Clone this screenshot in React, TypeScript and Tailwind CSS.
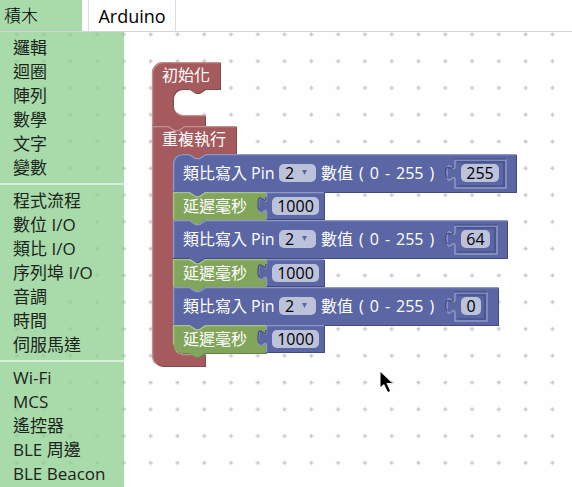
import type { ReactNode } from "react";

const SANS = "font-['Open_Sans','Noto_Sans_CJK_TC',sans-serif]";

type Tone = { base: string; light: string; dark: string };

const RED: Tone = { base: "#a55b5e", light: "#c28e90", dark: "#84494b" };
const BLUE: Tone = { base: "#5b67a5", light: "#8f98c3", dark: "#414b82" };
const GREEN: Tone = { base: "#80a55b", light: "#a8c28e", dark: "#668449" };

const GROUPS = [
  ["邏輯", "迴圈", "陣列", "數學", "文字", "變數"],
  ["程式流程", "數位 I/O", "類比 I/O", "序列埠 I/O", "音調", "時間", "伺服馬達"],
  ["Wi-Fi", "MCS", "遙控器", "BLE 周邊", "BLE Beacon"],
];

const NOTCH = "l6,4 h4 l6,-4";
const NOTCH_BACK = "l-6,4 h-4 l-6,-4";
const TAB = "v5 c0,11 -8,-9 -8,8 s8,-3 8,8";

/* Block outline with a lower-right shade and an upper-left highlight. */
function Shape({ d, edge, tone }: { d: string; edge: string; tone: Tone }) {
  return (
    <svg className="absolute inset-0 h-full w-full overflow-visible" aria-hidden="true">
      <path d={d} fill={tone.dark} transform="translate(1 1)" />
      <path d={d} fill={tone.base} />
      <path d={edge} fill="none" stroke={tone.light} strokeWidth="1.4" transform="translate(.6 .6)" />
    </svg>
  );
}

function Block({ place, children }: { place: string; children: ReactNode }) {
  return <div className={`absolute text-base leading-5 text-white ${place}`}>{children}</div>;
}

function NumberField({ label, value, width }: { label: string; value: string; width: string }) {
  return (
    <input
      aria-label={label}
      defaultValue={value}
      className={`relative h-[18px] rounded-[5px] bg-[#bdc2db] p-0 text-center text-base leading-[18px] text-black outline-none ${width}`}
    />
  );
}

type WriteProps = { place: string; width: number; slot: number; value: string; field: string; first?: boolean };

function WriteBlock({ place, width, slot, value, field, first = false }: WriteProps) {
  const start = first ? "M0,9 a9,9 0 0 1 9,-9" : "M0,0";
  const edgeStart = first ? "M0,37 V9 a9,9 0 0 1 9,-9" : "M0,37 V0";
  const right = 282 + slot;
  return (
    <Block place={place}>
      <Shape
        d={`${start} H16 ${NOTCH} H${width} V38 H32 ${NOTCH_BACK} H0 z`}
        edge={`${edgeStart} H16 ${NOTCH} H${width}`}
        tone={BLUE}
      />
      <svg className="absolute inset-0 h-full w-full overflow-visible" aria-hidden="true" fill="none">
        <path d={`M282,6 ${TAB} V34 H${right} V6 z`} stroke={BLUE.light} strokeWidth="1.5" />
        <path d={`M281,5 H${right}`} stroke={BLUE.dark} strokeWidth="1" />
        <path d={`M284,8 H${right - 2} V32 H284`} stroke={BLUE.dark} strokeWidth="1.2" />
        <path d="M280.5,12 c-1,6 -8,-4 -8,7 c0,3 1,4 2,5" stroke={BLUE.dark} strokeWidth="1.2" />
      </svg>
      <div className="relative flex h-[38px] items-center pl-[10px]">
        <span className="w-[68px] whitespace-nowrap">類比寫入</span>
        <span className="w-[28px]">Pin</span>
        <span className="relative block h-[18px] w-[37px]">
          <select
            aria-label="Pin"
            defaultValue="2"
            className="block h-[18px] w-full appearance-none rounded-[5px] bg-[#bdc2db] py-0 pr-0 pl-[6px] text-base leading-[18px] text-black outline-none"
          >
            <option>2</option>
            <option>3</option>
          </select>
          <svg className="pointer-events-none absolute top-[5px] right-[8px]" width="7" height="7" viewBox="0 0 7 7" aria-hidden="true">
            <path d="M1,1 H6 L3.5,6 z" fill="#5b67a5" />
          </svg>
        </span>
        <span className="flex w-[145px] gap-[6px] pl-[5px] whitespace-nowrap">
          <span>數值</span>
          <span>(</span>
          <span>0</span>
          <span>-</span>
          <span>255</span>
          <span>)</span>
        </span>
        <NumberField label="數值" value={value} width={field} />
      </div>
    </Block>
  );
}

function DelayBlock({ place, last = false }: { place: string; last?: boolean }) {
  const end = last ? "H9 a9,9 0 0 1 -9,-9 z" : "H0 z";
  return (
    <Block place={place}>
      <Shape
        d={`M0,0 H16 ${NOTCH} H93 V28 H32 ${NOTCH_BACK} ${end}`}
        edge={`M0,${last ? 19 : 27} V0 H16 ${NOTCH} H93`}
        tone={GREEN}
      />
      <svg className="absolute inset-0 h-full w-full overflow-visible" aria-hidden="true">
        <path d={`M93,0 ${TAB} V27 H151 V0 z`} fill={BLUE.dark} transform="translate(1 1)" />
        <path d={`M93,0 ${TAB} V27 H151 V0 z`} fill={BLUE.base} />
        <path d={`M151,.6 H93.6 ${TAB} V27`} fill="none" stroke={BLUE.light} strokeWidth="1.3" />
        <path d="M93,5 c0,11 -8,-9 -8,8 c0,3 1,5 2,5" fill="none" stroke={BLUE.dark} strokeWidth="1.2" />
      </svg>
      <div className="relative flex h-[28px] items-center pl-[10px]">
        <span className="w-[89px] whitespace-nowrap">延遲毫秒</span>
        <NumberField label="延遲毫秒" value="1000" width="w-[47px]" />
      </div>
    </Block>
  );
}

function SetupBlock() {
  const slot = `H53 ${NOTCH_BACK} H30 a9,9 0 0 0 -9,9 V44 a9,9 0 0 0 9,9 H53`;
  return (
    <Block place="left-[28px] top-[30px]">
      <Shape
        d={`M0,11 A11,11 0 0 1 11,0 H68 V27 ${slot} V64 H32 ${NOTCH_BACK} H0 z`}
        edge="M0,63 V11 A11,11 0 0 1 11,0 H68 M24,50 a9,9 0 0 0 6,3 H53"
        tone={RED}
      />
      <div className="relative flex h-[26px] items-center pl-[10px] whitespace-nowrap">初始化</div>
    </Block>
  );
}

function LoopBlock() {
  const slot = `H53 ${NOTCH_BACK} H30 a9,9 0 0 0 -9,9 V219 a9,9 0 0 0 9,9 H53`;
  return (
    <Block place="left-[28px] top-[94px]">
      <Shape
        d={`M0,0 H16 ${NOTCH} H84 V28 ${slot} V240 H11 a11,11 0 0 1 -11,-11 z`}
        edge={`M3,237 A11,11 0 0 1 0,229 V0 H16 ${NOTCH} H84 M24,225 a9,9 0 0 0 6,3 H53`}
        tone={RED}
      />
      <div className="relative flex h-[26px] items-center pl-[10px] whitespace-nowrap">重複執行</div>
    </Block>
  );
}

function DotGrid() {
  return (
    <svg className="absolute inset-0 h-full w-full" aria-hidden="true">
      <defs>
        <pattern id="dots" x="3.4" y="-11" width="26.78" height="26.78" patternUnits="userSpaceOnUse">
          <path d="M11.4,13.4 h4 M13.4,11.4 v4" stroke="#c4c4c4" strokeWidth="1.3" />
        </pattern>
      </defs>
      <rect width="100%" height="100%" fill="url(#dots)" />
    </svg>
  );
}

export default function App() {
  return (
    <div className={`flex min-h-screen w-full flex-col overflow-hidden bg-[#fefefe] ${SANS}`}>
      <header className="flex h-8 border-b border-[#d4d4d8] text-black">
        <button className="w-[82px] bg-[#a8daaa] pl-1 text-left text-[17px] leading-[30px] font-light">積木</button>
        <button className="ml-[6px] w-[88px] border-x border-[#dcdce2] text-center text-lg leading-[30px]">Arduino</button>
      </header>
      <main className="relative flex flex-1">
        <DotGrid />
        <nav className="relative w-[124px] shrink-0 bg-[#8bce8e]/75 pt-1">
          {GROUPS.map((group, i) => (
            <ul
              key={group[0]}
              className={i === 0 ? "" : "mt-[3px] border-t-2 border-[#dcecdc] pt-1"}
            >
              {group.map((name) => (
                <li key={name} className="h-6">
                  <button className="block w-full pl-[13px] text-left text-[17px] leading-6 whitespace-nowrap text-[#1c241c]">
                    {name}
                  </button>
                </li>
              ))}
            </ul>
          ))}
        </nav>
        <section className="relative flex-1" aria-label="積木">
          <SetupBlock />
          <LoopBlock />
          <WriteBlock place="left-[49px] top-[122px]" width={343} slot={51} value="255" field="w-[38px]" first />
          <DelayBlock place="left-[49px] top-[160px]" />
          <WriteBlock place="left-[49px] top-[188px]" width={334} slot={42} value="64" field="w-[29px]" />
          <DelayBlock place="left-[49px] top-[227px]" />
          <WriteBlock place="left-[49px] top-[255px]" width={325} slot={32} value="0" field="w-[20px]" />
          <DelayBlock place="left-[49px] top-[293px]" last />
          <svg className="absolute top-[340px] left-[256px]" width="14" height="22" viewBox="0 0 14 22" aria-hidden="true">
            <path d="M.5,0 V15 L4,12 L8,20 L10,19 L6.5,11 H12 z" fill="#000" />
          </svg>
        </section>
      </main>
    </div>
  );
}
